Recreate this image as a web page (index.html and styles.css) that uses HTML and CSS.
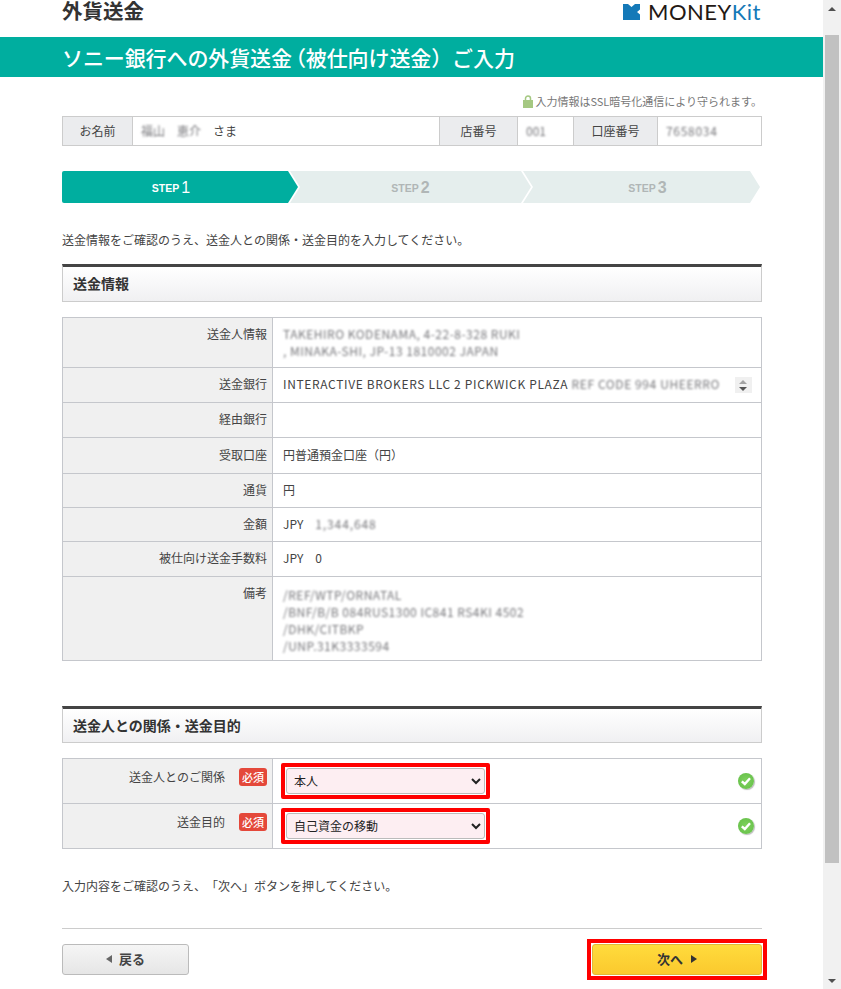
FILE: index.html
```html
<!DOCTYPE html>
<html lang="ja">
<head>
  <meta charset="UTF-8">
  <title>外貨送金</title>
  <meta name="viewport" content="width=device-width, initial-scale=1">
  <link rel="stylesheet" href="styles.css">
</head>
<body>
  <div class="page">
    <div class="wrap top">
      <div class="top-title">外貨送金</div>
      <div class="logo">
        <svg class="logo-mark" width="17" height="16" viewBox="0 0 17 16"><path d="M0 0H5L8.500 3L12 0H17V5.500L14 8L17 10.500V16H0Z" fill="#1479b8"/></svg>
        <span class="logo-text">MONEY<span class="logo-kit">Kit</span></span>
      </div>
    </div>
    <div class="band"><h1 class="wrap">ソニー銀行への外貨送金<span class="paren">（</span>被仕向け送金）ご入力</h1></div>

    <div class="wrap">
      <p class="ssl">
        <svg width="10" height="13" viewBox="0 0 10 13"><path d="M2.500 6V3.500a2.500 2.500 0 0 1 5 0V6" fill="none" stroke="#a5c882" stroke-width="1.500"/><rect y="5" width="10" height="8" fill="#a5c882"/></svg>
        入力情報はSSL暗号化通信により守られます。
      </p>

      <div class="account">
        <div class="acc-label acc-name">お名前</div>
        <div class="acc-value acc-name-value"><span class="blur">福山</span><span class="blur">恵介</span><span class="sama">さま</span></div>
        <div class="acc-label acc-shop">店番号</div>
        <div class="acc-value acc-shop-value"><span class="blur">001</span></div>
        <div class="acc-label acc-no">口座番号</div>
        <div class="acc-value acc-no-value"><span class="blur">7658034</span></div>
      </div>

      <div class="steps">
        <div class="step step1 active">STEP<b>1</b></div>
        <div class="step step2">STEP<b>2</b></div>
        <div class="step step3">STEP<b>3</b></div>
      </div>

      <p class="lead">送金情報をご確認のうえ、送金人との関係・送金目的を入力してください。</p>

      <h2 class="sec-head">送金情報</h2>
      <table class="info">
        <tr class="r50"><th>送金人情報</th><td><div class="blur blur-block">TAKEHIRO KODENAMA, 4-22-8-328 RUKI<br>, MINAKA-SHI, JP-13 1810002 JAPAN</div></td></tr>
        <tr class="r35"><th>送金銀行</th><td class="bank"><span>INTERACTIVE BROKERS LLC 2 PICKWICK PLAZA <span class="blur">REF CODE 994 UHEERRO</span></span>
          <span class="spin"><i class="up"></i><i class="down"></i></span></td></tr>
        <tr class="r35"><th>経由銀行</th><td></td></tr>
        <tr class="r36"><th>受取口座</th><td>円普通預金口座（円）</td></tr>
        <tr class="r34"><th>通貨</th><td>円</td></tr>
        <tr class="r34"><th>金額</th><td>JPY<span class="gap"></span><span class="blur amount">1,344,648</span></td></tr>
        <tr class="r35"><th>被仕向け送金手数料</th><td>JPY<span class="gap"></span>0</td></tr>
        <tr class="r84"><th>備考</th><td><div class="blur blur-block note">/REF/WTP/ORNATAL<br>/BNF/B/B 084RUS1300 IC841 RS4KI 4502<br>/DHK/CITBKP<br>/UNP.31K3333594</div></td></tr>
      </table>

      <h2 class="sec-head sec-second">送金人との関係・送金目的</h2>
      <table class="info form">
        <tr><th><span class="th-text">送金人とのご関係</span><span class="req">必須</span></th>
          <td><div class="form-cell"><span class="mark"><select><option>本人</option></select></span><span class="ok"><svg width="16" height="16" viewBox="0 0 16 16"><path d="M3.800 8.300L6.800 11L12 5.300" fill="none" stroke="#fff" stroke-width="2.400"/></svg></span></div></td></tr>
        <tr><th><span class="th-text">送金目的</span><span class="req">必須</span></th>
          <td><div class="form-cell"><span class="mark"><select><option>自己資金の移動</option></select></span><span class="ok"><svg width="16" height="16" viewBox="0 0 16 16"><path d="M3.800 8.300L6.800 11L12 5.300" fill="none" stroke="#fff" stroke-width="2.400"/></svg></span></div></td></tr>
      </table>

      <p class="confirm">入力内容をご確認のうえ、「次へ」ボタンを押してください。</p>

      <div class="actions">
        <button class="btn btn-back"><i class="arrow-left"></i>戻る</button>
        <span class="mark mark-next"><button class="btn btn-next">次へ<i class="arrow-right"></i></button></span>
      </div>
    </div>
  </div>

  <div class="scrollbar">
    <div class="sb-btn"><i class="sb-up"></i></div>
    <div class="sb-track"><div class="sb-thumb"></div></div>
    <div class="sb-btn"><i class="sb-down"></i></div>
  </div>
</body>
</html>
```

FILE: styles.css
```css
html, body {
  height: 100%;
}

body {
  margin: 0;
  display: flex;
  overflow: hidden;
  background: #fff;
  color: #444;
  font-family: "Noto Sans CJK JP", "Noto Sans", sans-serif;
  font-size: 12px;
  text-spacing-trim: space-all;
}

.page {
  width: 823px;
  flex-shrink: 0;
}

.wrap {
  width: 700px;
  margin-left: 62px;
}

.top {
  height: 37px;
  display: flex;
  justify-content: space-between;
  align-items: flex-start;
}

.top-title {
  font-size: 20.500px;
  font-weight: bold;
  line-height: 20px;
  color: #333;
}

.logo {
  display: flex;
  align-items: center;
  height: 24px;
  margin-right: 1px;
}

.logo-mark {
  margin-right: 8px;
}

.logo-text {
  font-family: "Lato", sans-serif;
  font-size: 22px;
  line-height: 24px;
  color: #231815;
  letter-spacing: 0.500px;
}

.logo-kit {
  color: #1479b8;
}

.band {
  height: 40px;
  background: #00ae9f;
}

.band h1 {
  margin: 0 0 0 62px;
  width: auto;
  color: #fff;
  font-size: 21px;
  font-weight: 500;
  line-height: 40px;
  letter-spacing: -0.100px;
  white-space: nowrap;
}

.paren {
  font-feature-settings: "halt";
  padding-left: 3.500px;
}

.ssl {
  margin: 16px 0 0;
  height: 23px;
  font-size: 11px;
  line-height: 16px;
  color: #777;
  text-align: right;
}

.ssl svg {
  vertical-align: -2px;
}

.account {
  display: flex;
  height: 30px;
  border: 1px solid #ccc;
  box-sizing: border-box;
  line-height: 28px;
}

.acc-label {
  background: #ebecee;
  text-align: center;
  color: #444;
  flex-shrink: 0;
}

.acc-value {
  padding-left: 8px;
  box-sizing: border-box;
  flex-shrink: 0;
  border-left: 1px solid #ccc;
}

.acc-label + .acc-value + .acc-label {
  border-left: 1px solid #ccc;
}

.acc-name { width: 69px; }
.acc-name-value { width: 307px; }
.acc-shop { width: 78px; box-sizing: border-box; }
.acc-shop-value { width: 56px; }
.acc-no { width: 84px; box-sizing: border-box; }
.acc-no-value { width: 104px; }

.acc-name-value .blur {
  margin-right: 12px;
}

.acc-no-value .blur {
  letter-spacing: 0.700px;
}

.blur {
  filter: blur(1.200px);
  color: #77777b;
  display: inline-block;
}

.blur-block {
  display: block;
  line-height: 17px;
  letter-spacing: 0.500px;
}

.amount {
  letter-spacing: 0.900px;
}

.note {
  padding-top: 2px;
}

.steps {
  display: flex;
  margin-top: 25px;
  height: 32px;
}

.step {
  height: 32px;
  line-height: 33px;
  background: #e5eeed;
  color: #b0b6b6;
  font-family: "Liberation Sans", sans-serif;
  font-size: 10.500px;
  font-weight: bold;
  text-align: center;
  box-sizing: border-box;
  margin-left: -8px;
  clip-path: polygon(0 0, calc(100% - 10px) 0, 100% 50%, calc(100% - 10px) 100%, 0 100%, 10px 50%);
}

.step b {
  font-size: 16px;
  margin-left: 2px;
  vertical-align: -1px;
}

.step1 {
  width: 236px;
  margin-left: 0;
  padding-right: 18px;
  border-radius: 2px 0 0 2px;
  clip-path: polygon(0 0, calc(100% - 10px) 0, 100% 50%, calc(100% - 10px) 100%, 0 100%);
}

.step2 { width: 241px; }

.step3 {
  width: 237px;
  padding-left: 12px;
}

.step.active {
  background: #00ae9f;
  color: #fff;
}

.step.active b {
  font-weight: normal;
}

.lead {
  margin: 28px 0 0;
  height: 33px;
  line-height: 18px;
  color: #444;
}

.sec-head {
  margin: 0;
  height: 38px;
  box-sizing: border-box;
  padding-left: 10px;
  border: 1px solid #ccc;
  border-top: 3px solid #444;
  background: linear-gradient(#fff, #f0f0f2);
  font-size: 14px;
  font-weight: bold;
  line-height: 32px;
  color: #333;
}

.sec-second {
  margin-top: 45px;
  height: 37px;
}

.info {
  width: 700px;
  margin-top: 15px;
  border-collapse: collapse;
  table-layout: fixed;
}

.info th, .info td {
  border: 1px solid #c5c7cc;
  padding: 0 10px 2px;
  font-weight: normal;
  vertical-align: middle;
  line-height: 18px;
}

.info th {
  width: 199px;
  background: #f0f0f0;
  text-align: right;
  padding-right: 5px;
  padding-left: 5px;
  color: #444;
}

.r50 { height: 50px; }
.r36 { height: 36px; }
.r35 { height: 35px; }
.r34 { height: 34px; }
.r84 { height: 84px; }

.r50 th, .r50 td, .r84 th, .r84 td {
  vertical-align: top;
  padding-top: 7px;
}

.bank {
  position: relative;
  white-space: nowrap;
  overflow: hidden;
  letter-spacing: 0.650px;
}

.bank .blur {
  letter-spacing: 0.600px;
}

.spin {
  position: absolute;
  right: 9px;
  top: 9px;
  width: 17px;
  height: 16px;
  background: #f0f0f0;
}

.spin i {
  position: absolute;
  left: 4px;
  border-left: 4px solid transparent;
  border-right: 4px solid transparent;
}

.spin .up {
  top: 3px;
  border-bottom: 4px solid #a3a3a3;
}

.spin .down {
  bottom: 2px;
  border-top: 4px solid #555;
}

.gap {
  display: inline-block;
  width: 12px;
}

.form {
  margin-top: 15px;
}

.form tr {
  height: 45px;
}

.form th {
  vertical-align: top;
  padding-top: 9px;
  padding-right: 5px;
}

.form td {
  padding: 0 0 0 8px;
}

.th-text {
  margin-right: 14px;
}

.req {
  display: inline-block;
  width: 28px;
  height: 18px;
  line-height: 18px;
  background: #e4483a;
  color: #fff;
  border-radius: 3px;
  font-size: 11px;
  font-weight: 500;
  text-align: center;
}

.form-cell {
  display: flex;
  justify-content: space-between;
  align-items: center;
  padding-right: 7px;
}

.mark {
  display: block;
  border: 4px solid #f00;
  padding: 1px;
  background: #fff;
  border-radius: 2px;
}

.mark select {
  display: block;
  width: 199px;
  height: 26px;
  font-family: inherit;
  font-size: 12px;
  color: #222;
  background: #fdeef2;
  border: 1px solid #bbb;
  border-radius: 3px;
  padding: 0 0 2px 3px;
}

.ok {
  width: 16px;
  height: 16px;
  border-radius: 50%;
  background: radial-gradient(#7fd25e, #62bd46);
  box-shadow: 1px 1px 1px #bbb;
}

.ok svg {
  display: block;
}

.confirm {
  margin: 28px 0 0;
  height: 51px;
  line-height: 18px;
}

.actions {
  display: flex;
  justify-content: space-between;
  align-items: flex-start;
  border-top: 1px solid #ccc;
  height: 61px;
  box-sizing: border-box;
  padding-top: 10px;
}

.btn {
  display: block;
  font-family: inherit;
  font-size: 13px;
  font-weight: bold;
  color: #444;
  border-radius: 3px;
  padding: 0 0 3px;
  box-sizing: border-box;
}

.btn i {
  display: inline-block;
  border-top: 4px solid transparent;
  border-bottom: 4px solid transparent;
}

.btn-back {
  width: 127px;
  height: 31px;
  margin-top: 5px;
  border: 1px solid #bbb;
  background: linear-gradient(#f5f5f5, #e6e6e6);
}

.arrow-left {
  border-right: 6px solid #666;
  margin-right: 7px;
  vertical-align: 1px;
}

.mark-next {
  padding: 1px;
  border-radius: 0;
  margin-right: -5px;
}

.btn-next {
  width: 170px;
  height: 31px;
  border: 1px solid #e0b73a;
  background: linear-gradient(#ffdb3c, #fbc92e);
  color: #333;
}

.arrow-right {
  border-left: 6px solid #333;
  margin-left: 8px;
  vertical-align: 1px;
}

.scrollbar {
  width: 18px;
  flex-shrink: 0;
  height: 989px;
  background: #f1f1f1;
  display: flex;
  flex-direction: column;
}

.sb-btn {
  height: 17px;
  display: flex;
  justify-content: center;
  align-items: center;
  flex-shrink: 0;
}

.sb-btn i {
  border-left: 4px solid transparent;
  border-right: 4px solid transparent;
}

.sb-up {
  border-bottom: 4px solid #505050;
}

.sb-down {
  border-top: 4px solid #505050;
}

.sb-track {
  flex: 1;
  padding: 18px 2px 0;
}

.sb-thumb {
  height: 828px;
  background: #c1c1c1;
}
```
